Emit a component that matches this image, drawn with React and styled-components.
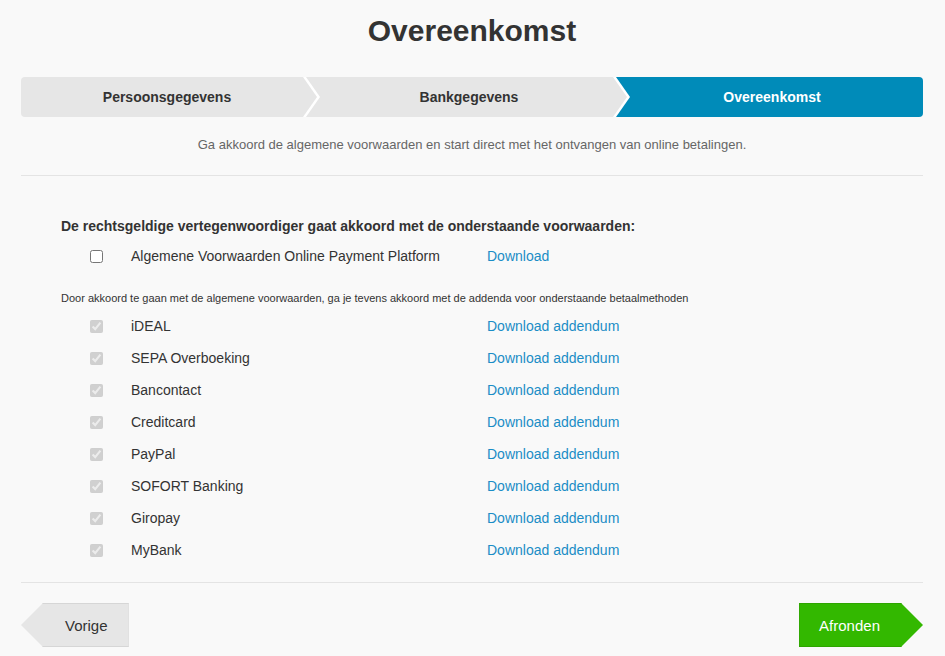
import { createGlobalStyle, styled } from 'styled-components'

const GlobalStyle = createGlobalStyle`
  *, *::before, *::after {
    box-sizing: border-box;
  }
  body {
    margin: 0;
    background: #f9f9f9;
    font-family: 'Liberation Sans', Arial, sans-serif;
    color: #333;
  }
`

const StyledPage = styled.div`
  padding: 14px 22px 0 21px;
`
const StyledTitle = styled.h1`
  margin: 0;
  font-size: 30px;
  line-height: 34px;
  font-weight: 700;
  text-align: center;
  color: #333;
`
const StyledSteps = styled.div`
  display: flex;
  height: 40px;
  margin-top: 29px;
  border-radius: 4px;
  overflow: hidden;
`
const StyledStep = styled.div`
  position: relative;
  flex: ${(p) => (p.$width ? `0 0 ${p.$width}px` : '1')};
  display: flex;
  align-items: center;
  justify-content: center;
  padding-left: ${(p) => p.$shift}px;
  font-size: 14px;
  font-weight: 700;
  background: ${(p) => (p.$active ? '#008bb9' : '#e6e6e6')};
  color: ${(p) => (p.$active ? '#fff' : '#333')};

  ${(p) =>
    p.$arrow &&
    `
    &::before {
      content: '';
      position: absolute;
      top: 0;
      left: 100%;
      width: 17px;
      height: 100%;
      background: #fff;
      clip-path: polygon(0 0, 3px 0, 17px 50%, 3px 100%, 0 100%);
      z-index: 1;
    }
    &::after {
      content: '';
      position: absolute;
      top: 0;
      left: 100%;
      width: 14px;
      height: 100%;
      background: ${p.$active ? '#008bb9' : '#e6e6e6'};
      clip-path: polygon(0 0, 100% 50%, 0 100%);
      z-index: 2;
    }
  `}
`
const StyledIntro = styled.p`
  margin: 19px 0 0;
  font-size: 13px;
  line-height: 18px;
  color: #666;
  text-align: center;
`
const StyledDivider = styled.hr`
  margin: ${(p) => p.$top}px 0 0;
  border: 0;
  border-top: 1px solid #e4e4e4;
`
const StyledTerms = styled.section`
  padding: 40px 40px 0;
`
const StyledHeading = styled.h3`
  margin: 0 0 4px;
  font-size: 14px;
  line-height: 20px;
  font-weight: 700;
`
const StyledRow = styled.label`
  display: grid;
  grid-template-columns: 70px 356px auto;
  align-items: center;
  height: 32px;
  font-size: 14px;

  input {
    margin: 0;
    justify-self: center;
  }
`
const StyledLink = styled.a`
  color: #1b8dc6;
  text-decoration: none;
  justify-self: start;
  cursor: pointer;
`
const StyledNote = styled.p`
  margin: 18px 0 4px;
  font-size: 11px;
  line-height: 16px;
`
const StyledFooter = styled.div`
  display: flex;
  justify-content: space-between;
  margin-top: 20px;
`
const StyledButton = styled.button`
  height: 44px;
  border: 1px solid ${(p) => (p.$primary ? '#2ea500' : '#d6d6d6')};
  font-family: inherit;
  font-size: 15px;
  cursor: pointer;
  background: ${(p) => (p.$primary ? '#33b800' : '#e6e6e6')};
  color: ${(p) => (p.$primary ? '#fff' : '#333')};
  padding: ${(p) => (p.$primary ? '0 43px 0 19px' : '0 20px 0 44px')};
  ${(p) =>
    p.$primary
      ? `border-right: 0; clip-path: polygon(0 0, calc(100% - 22px) 0, 100% 50%, calc(100% - 22px) 100%, 0 100%);`
      : `border-left: 0; clip-path: polygon(22px 0, 100% 0, 100% 100%, 22px 100%, 0 50%);`}
`

const steps = [
  { label: 'Persoonsgegevens', width: 282, shift: 10 },
  { label: 'Bankgegevens', width: 310, shift: 22 },
  { label: 'Overeenkomst', shift: 8, active: true },
]

const methods = [
  'iDEAL',
  'SEPA Overboeking',
  'Bancontact',
  'Creditcard',
  'PayPal',
  'SOFORT Banking',
  'Giropay',
  'MyBank',
]

function App() {
  return (
    <StyledPage>
      <GlobalStyle />
      <StyledTitle>Overeenkomst</StyledTitle>

      <StyledSteps>
        {steps.map((step, i) => (
          <StyledStep
            key={step.label}
            $width={step.width}
            $shift={step.shift}
            $active={step.active}
            $arrow={i < steps.length - 1}
          >
            {step.label}
          </StyledStep>
        ))}
      </StyledSteps>

      <StyledIntro>
        Ga akkoord de algemene voorwaarden en start direct met het ontvangen van online betalingen.
      </StyledIntro>
      <StyledDivider $top={21} />

      <StyledTerms>
        <StyledHeading>
          De rechtsgeldige vertegenwoordiger gaat akkoord met de onderstaande voorwaarden:
        </StyledHeading>
        <StyledRow>
          <input type="checkbox" />
          <span>Algemene Voorwaarden Online Payment Platform</span>
          <StyledLink>Download</StyledLink>
        </StyledRow>

        <StyledNote>
          Door akkoord te gaan met de algemene voorwaarden, ga je tevens akkoord met de addenda voor
          onderstaande betaalmethoden
        </StyledNote>
        {methods.map((m) => (
          <StyledRow key={m}>
            <input type="checkbox" checked disabled readOnly />
            <span>{m}</span>
            <StyledLink>Download addendum</StyledLink>
          </StyledRow>
        ))}
      </StyledTerms>

      <StyledDivider $top={16} />
      <StyledFooter>
        <StyledButton>Vorige</StyledButton>
        <StyledButton $primary>Afronden</StyledButton>
      </StyledFooter>
    </StyledPage>
  )
}

export default App
